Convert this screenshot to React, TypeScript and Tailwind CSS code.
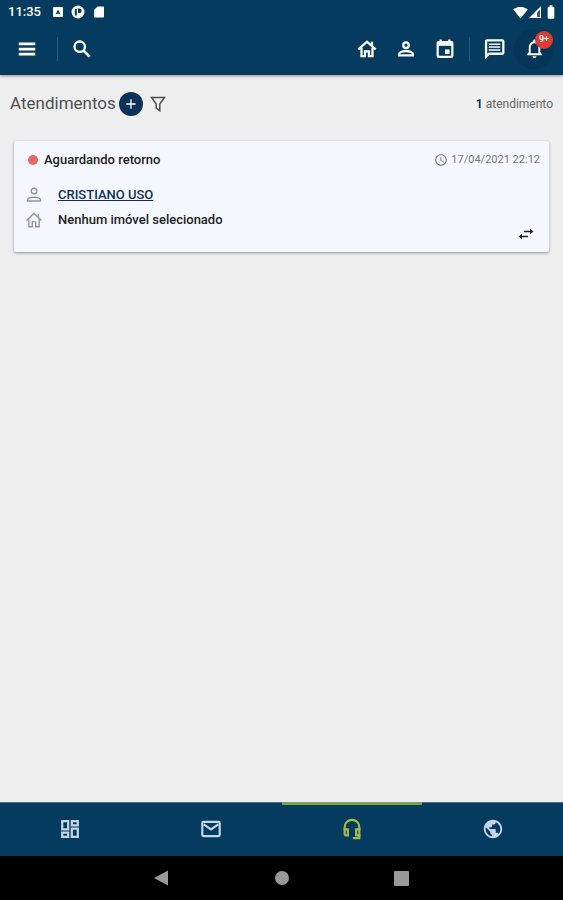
import React from "react";
import {
  MdNotificationsNone,
  MdAdd,
  MdSignalWifi4Bar,
  MdBatteryFull,
  MdPublic,
  MdAccessTime
} from "react-icons/md";

interface IconProps {
  className?: string;
}

const MenuIcon: React.FC<IconProps> = ({ className }) => (
  <svg viewBox="0 0 24 24" className={className} fill="none" stroke="currentColor" strokeWidth="3">
    <path d="M3 6.5h18M3 12h18M3 17.5h18" />
  </svg>
);

const SearchIcon: React.FC<IconProps> = ({ className }) => (
  <svg viewBox="0 0 24 24" className={className} fill="none" stroke="currentColor" strokeWidth="2.5">
    <circle cx="9.5" cy="9.5" r="5.7" />
    <path d="m13.8 13.8 6.5 6.5" strokeWidth="3" />
  </svg>
);

const HouseIcon: React.FC<IconProps> = ({ className }) => (
  <svg viewBox="0 0 24 24" className={className} fill="none" stroke="currentColor" strokeWidth="2.5">
    <path d="M2.5 12.500 12 4l9.500 8.500" />
    <path d="M17.500 8V4" />
    <path d="M6 10.5v9.200h3.800v-5.200h4.400v5.200H18v-9.200" />
  </svg>
);

const ClientIcon: React.FC<IconProps> = ({ className }) => (
  <svg viewBox="0 0 24 24" className={className} fill="none" stroke="currentColor" strokeWidth="2.500">
    <circle cx="12" cy="7.800" r="3" />
    <path d="M4.500 19v-1.500c0-2.200 4.200-3.300 7.500-3.300s7.500 1.100 7.500 3.300V19z" />
  </svg>
);

const CalendarIcon: React.FC<IconProps> = ({ className }) => (
  <svg viewBox="0 0 24 24" className={className} fill="none" stroke="currentColor" strokeWidth="2.400">
    <rect x="4" y="4.500" width="16" height="16" rx="1" />
    <path d="M4 7h16" strokeWidth="3" />
    <path d="M7.300 1.500v3M16.700 1.500v3" />
    <path d="M12 12.500h5v5h-5z" fill="currentColor" stroke="none" />
  </svg>
);

const ChatIcon: React.FC<IconProps> = ({ className }) => (
  <svg viewBox="0 0 24 24" className={className} fill="none" stroke="currentColor">
    <path d="M3.200 20.500V4.500a1 1 0 0 1 1-1h16a1 1 0 0 1 1 1v12a1 1 0 0 1-1 1H6.200z" strokeWidth="2.400" />
    <path d="M6 7.500h12M6 10.500h12M6 13.500h12" strokeWidth="1.600" />
  </svg>
);

const SdCardIcon: React.FC<IconProps> = ({ className }) => (
  <svg viewBox="0 0 12 12" className={className} fill="currentColor">
    <path d="M4.500 .5H10a1 1 0 0 1 1 1v9a1 1 0 0 1-1 1H2a1 1 0 0 1-1-1V4z" />
  </svg>
);

const DashboardIcon: React.FC<IconProps> = ({ className }) => (
  <svg viewBox="0 0 24 24" className={className} fill="none" stroke="currentColor" strokeWidth="2.400">
    <path d="M3.500 3.500H10v9H3.500zM14 3.500h6.500v4.500H14zM3.500 16H10v4.500H3.500zM14 11.500h6.500v9H14z" />
  </svg>
);

const MailIcon: React.FC<IconProps> = ({ className }) => (
  <svg viewBox="0 0 24 24" className={className} fill="none" stroke="currentColor" strokeWidth="2.400">
    <rect x="2.500" y="4.200" width="19" height="15.600" rx="1.500" />
    <path d="M4 7l8 5.500L20 7" />
  </svg>
);

const FilterIcon: React.FC<IconProps> = ({ className }) => (
  <svg viewBox="0 0 16 16" className={className} fill="none" stroke="currentColor" strokeWidth="1.500">
    <path d="M1.500 1.500h13L9.800 8v6.800L6.200 12.200V8z" />
  </svg>
);

const PersonIcon: React.FC<IconProps> = ({ className }) => (
  <svg viewBox="0 0 16 16" className={className} fill="none" stroke="currentColor" strokeWidth="1.400">
    <circle cx="8" cy="4" r="2.800" />
    <path d="M1.500 14v-1C1.500 11.200 5 10.200 8 10.200s6.500 1 6.500 2.800v1z" />
  </svg>
);

const HomeIcon: React.FC<IconProps> = ({ className }) => (
  <svg viewBox="0 0 16 16" className={className} fill="none" stroke="currentColor" strokeWidth="1.400">
    <path d="M.6 8.400 8 1.300l7.400 7.100" />
    <path d="M12.300 5.200V2.300" />
    <path d="M2.800 6.800v8h3.500V9.900h3.400v4.900h3.500v-8" />
  </svg>
);

const SwapIcon: React.FC<IconProps> = ({ className }) => (
  <svg viewBox="0 0 16 12" className={className} fill="currentColor">
    <path d="M6 2.700h6V.8l3.500 2.700L12 6.200V4.300H6zM10 7.700H4V5.800L.5 8.500 4 11.200V9.300h6z" />
  </svg>
);

const HeadsetIcon: React.FC<IconProps> = ({ className }) => (
  <svg viewBox="0 0 20 24" className={className} fill="none" stroke="currentColor" strokeWidth="2.400">
    <path d="M2 13v-3a8 8 0 0 1 16 0v3" />
    <path d="M2 12.500h3.500v6.500H4a2 2 0 0 1-2-2zM18 12.500h-3.500v6.500H18z" />
    <path d="M18 18v4h-7" />
  </svg>
);

const SignalIcon: React.FC<IconProps> = ({ className }) => (
  <svg viewBox="0 0 12 12" className={className}>
    <path d="M0 12 12 0v12z" fill="#ffffff" />
    <path d="M8 6.500 11 3.500V11H8z" fill="#335a79" />
  </svg>
);

const topActions = [
  { label: "Imóveis", icon: HouseIcon },
  { label: "Clientes", icon: ClientIcon },
  { label: "Agenda", icon: CalendarIcon }
];

const tabs = [
  { label: "Painel", icon: DashboardIcon, active: false },
  { label: "E-mails", icon: MailIcon, active: false },
  { label: "Atendimentos", icon: HeadsetIcon, active: true },
  { label: "Site", icon: MdPublic, active: false }
];

const StatusBar: React.FC = () => (
  <div className="flex h-6 items-center px-2 text-white">
    <span className="w-[42px] text-[13px] font-medium">11:35</span>
    <svg viewBox="0 0 10 10" className="ml-[3px] h-[10px] w-[10px]">
      <rect width="10" height="10" rx="1" fill="#ffffff" />
      <path d="M2.500 7.500 5 2.500l2.500 5-2.500-1z" fill="#063b60" />
    </svg>
    <svg viewBox="0 0 14 14" className="ml-2 h-[14px] w-[14px]">
      <circle cx="7" cy="7" r="6.500" fill="#ffffff" />
      <path d="M3.800 4h2v6.500h-2zM7 3.500h1.500a2.200 2.200 0 0 1 0 4.400H7z" fill="#063b60" />
    </svg>
    <SdCardIcon className="ml-2 h-3 w-3" />
    <div className="ml-auto flex items-center">
      <MdSignalWifi4Bar className="h-[15px] w-[15px]" />
      <SignalIcon className="ml-px h-3 w-3" />
      <MdBatteryFull className="ml-[2px] -mr-1 h-4 w-4" />
    </div>
  </div>
);

const TopBar: React.FC = () => (
  <div className="flex h-[51px] items-center pr-[9px] pb-[2px] pl-[7px] text-white">
    <button aria-label="Menu" className="flex h-10 w-10 items-center justify-center">
      <MenuIcon className="h-[22px] w-[22px]" />
    </button>
    <span className="ml-[10px] h-6 w-px bg-[#2a5474]" />
    <button aria-label="Buscar" className="ml-1 flex h-10 w-10 items-center justify-center">
      <SearchIcon className="h-[22px] w-[22px]" />
    </button>
    <div className="ml-auto flex items-center">
      {topActions.map(({ label, icon: Icon }) => (
        <button key={label} aria-label={label} className="flex h-10 w-[39px] items-center justify-center">
          <Icon className="h-[22px] w-[22px]" />
        </button>
      ))}
      <span className="mr-1 ml-[5px] h-6 w-px bg-[#2a5474]" />
      <button aria-label="Mensagens" className="flex h-10 w-10 items-center justify-center">
        <ChatIcon className="h-[23px] w-[23px]" />
      </button>
      <button
        aria-label="Notificações"
        className="relative flex h-10 w-10 items-center justify-center rounded-full bg-[#053557]"
      >
        <MdNotificationsNone className="h-[23px] w-[23px]" />
        <span className="absolute top-[2px] right-px flex h-[18px] w-[18px] items-center justify-center rounded-full bg-[#df3b30] text-[9px] font-medium">
          9+
        </span>
      </button>
    </div>
  </div>
);

const AttendanceCard: React.FC = () => (
  <article className="mx-[14px] rounded-[2px] bg-[#f4f8fe] pt-[9px] pr-[9px] pb-4 pl-3 shadow-[0_1px_3px_rgba(0,0,0,0.4)]">
    <div className="flex h-5 items-center">
      <span className="ml-[2px] h-[10px] w-[10px] rounded-full bg-[#e66a64]" />
      <h2 className="ml-[6px] text-[13px] font-medium text-[#222222]">Aguardando retorno</h2>
      <time className="ml-auto flex items-center text-[11px] text-[#777777]">
        <MdAccessTime className="mr-[3px] h-[14px] w-[14px]" />
        17/04/2021 22:12
      </time>
    </div>
    <div className="mt-3 flex h-[25px] items-center">
      <PersonIcon className="h-4 w-4 text-[#949494]" />
      <a href="#cliente" className="ml-4 text-[13px] font-medium text-[#10305c] underline">
        CRISTIANO USO
      </a>
    </div>
    <div className="flex h-[25px] items-center">
      <HomeIcon className="h-4 w-4 text-[#949494]" />
      <span className="ml-4 text-[13px] font-medium text-[#222222]">Nenhum imóvel selecionado</span>
    </div>
    <div className="flex h-1 items-center justify-end pr-[6px]">
      <button aria-label="Transferir" className="text-[#222222]">
        <SwapIcon className="h-3 w-4" />
      </button>
    </div>
  </article>
);

const BottomTabs: React.FC = () => (
  <nav className="grid h-[54px] grid-cols-4 bg-[#063b60]">
    {tabs.map(({ label, icon: Icon, active }) => (
      <button
        key={label}
        aria-label={label}
        className={
          active
            ? "flex items-center justify-center border-t-[3px] border-[#7f9f54] pb-[3px] text-[#a5b84a]"
            : "flex items-center justify-center border-t border-[#526b84] pb-px text-[#c5d5e5]"
        }
      >
        <Icon className="h-[22px] w-[22px]" />
      </button>
    ))}
  </nav>
);

export default function App() {
  return (
    <div className="flex min-h-screen flex-col bg-[#eeeeee] font-[Roboto,sans-serif]">
      <header className="bg-[#063b60] shadow-[0_1px_3px_rgba(0,0,0,0.4)]">
        <StatusBar />
        <TopBar />
      </header>
      <main className="flex-1">
        <div className="flex h-[66px] items-center px-[10px] pb-2">
          <h1 className="text-[17px] text-[#505050]">Atendimentos</h1>
          <button
            aria-label="Novo atendimento"
            className="ml-[3px] flex h-6 w-6 items-center justify-center rounded-full bg-[#0b3157] text-white"
          >
            <MdAdd className="h-4 w-4" />
          </button>
          <button aria-label="Filtrar" className="ml-[7px] text-[#505050]">
            <FilterIcon className="h-4 w-4" />
          </button>
          <p className="ml-auto text-[12px] text-[#666666]">
            <b className="text-[#10305c]">1</b> atendimento
          </p>
        </div>
        <AttendanceCard />
      </main>
      <BottomTabs />
      <div className="grid h-11 grid-cols-[1fr_120px_120px_120px_1fr] items-center bg-black text-[#999999]">
        <span />
        <button aria-label="Voltar" className="flex justify-center">
          <svg viewBox="0 0 16 16" className="h-4 w-4" fill="currentColor">
            <path d="M0 8 14 .5v15z" />
          </svg>
        </button>
        <button aria-label="Início" className="flex justify-center">
          <span className="h-[14px] w-[14px] rounded-full bg-[#999999]" />
        </button>
        <button aria-label="Recentes" className="flex justify-center">
          <span className="h-[15px] w-[15px] rounded-[1px] bg-[#999999]" />
        </button>
      </div>
    </div>
  );
}
